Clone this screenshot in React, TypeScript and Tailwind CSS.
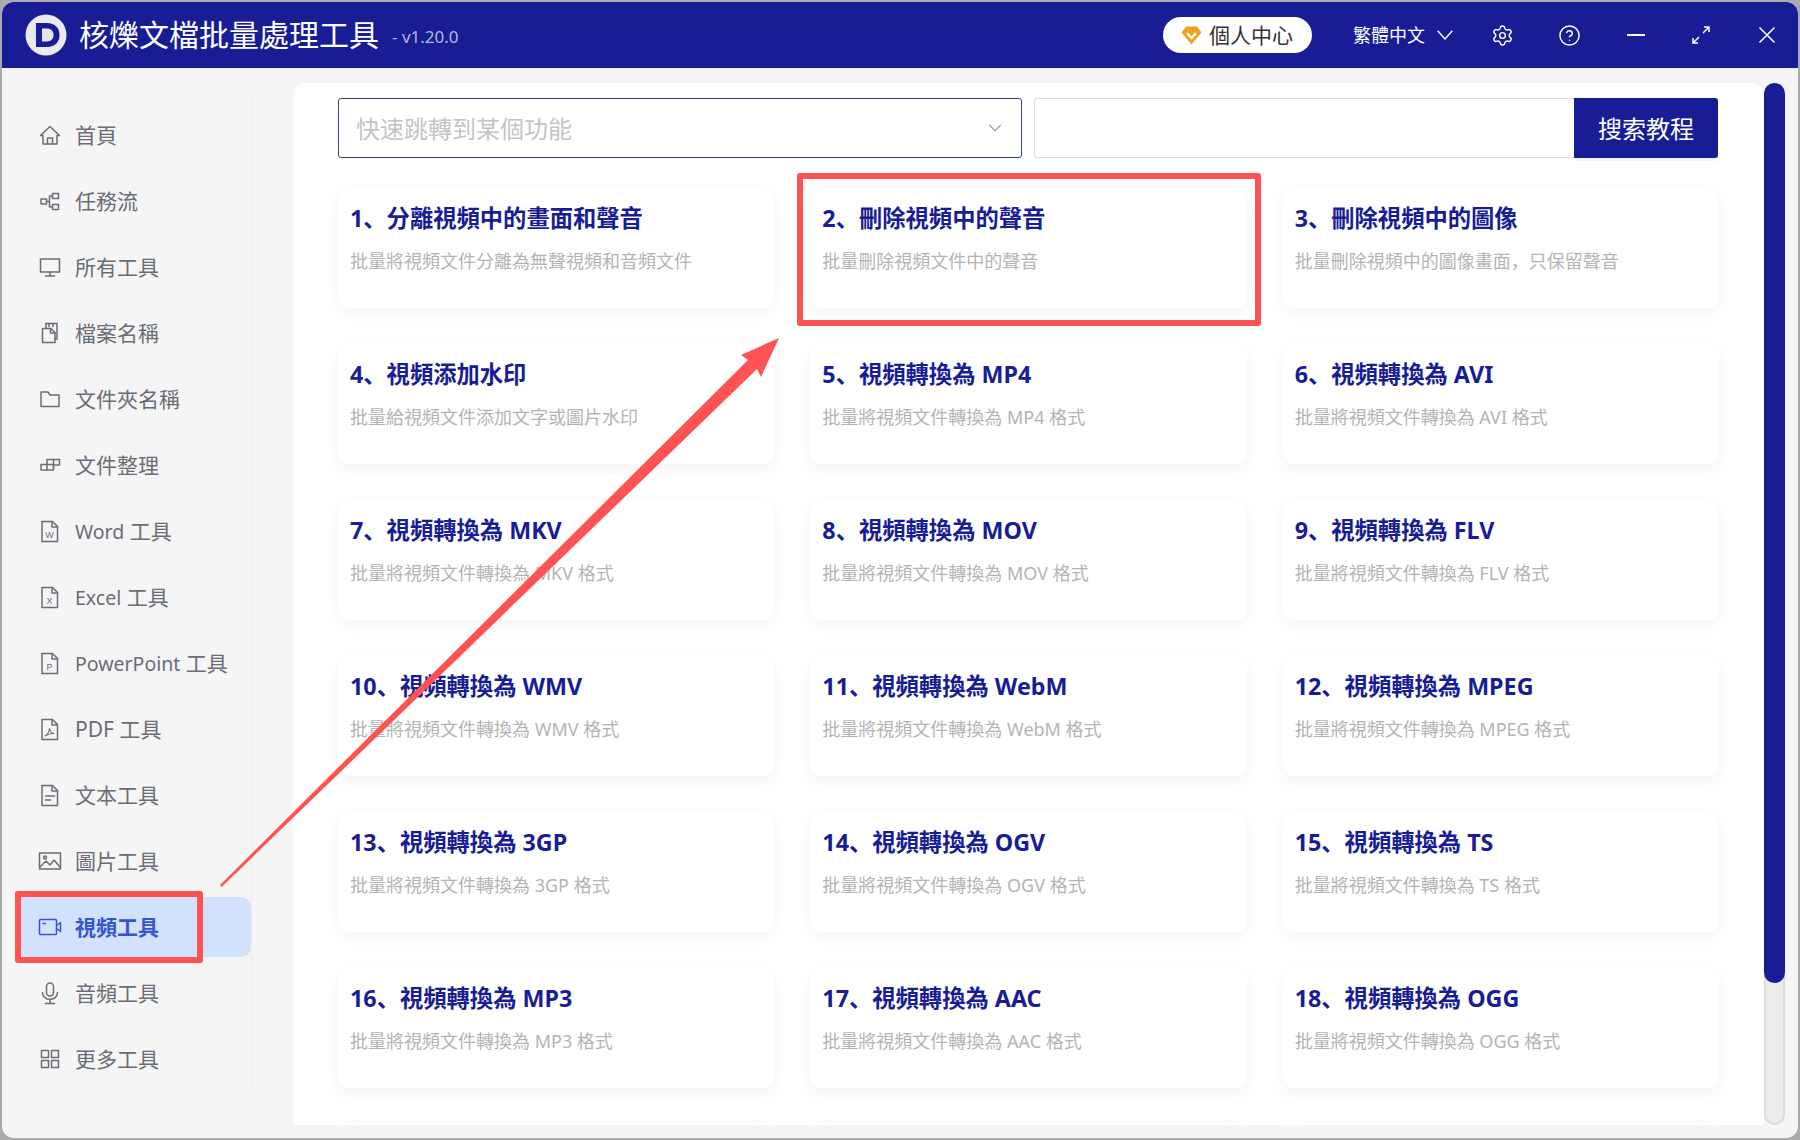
import React from 'react'
import { Settings, CircleHelp, ChevronDown } from 'lucide-react'

const sw = { fill: 'none', stroke: 'currentColor', strokeWidth: 1.5, strokeLinejoin: 'round', strokeLinecap: 'round' } as const

function Svg({ w = 24, h = 24, children }: { w?: number; h?: number; children: React.ReactNode }) {
  return (
    <svg width={w} height={h} viewBox={`0 0 ${w} ${h}`} {...sw}>
      {children}
    </svg>
  )
}

// page with a folded corner, shared by the file type icons
function Doc({ children }: { children?: React.ReactNode }) {
  return (
    <Svg>
      <path d="M4 2.5h10.5l5 5v15H4z" />
      <path d="M14 2.5v5.5h5.5" />
      {children}
    </Svg>
  )
}

function Letter({ c }: { c: string }) {
  return (
    <text x="11.5" y="18.5" textAnchor="middle" fontSize="9" stroke="none" fill="currentColor" fontFamily="Liberation Sans, sans-serif">
      {c}
    </text>
  )
}

function Latin({ text }: { text: string }) {
  return (
    <>
      <span className="text-[19.5px]">{text}</span> 工具
    </>
  )
}

const menu: { key: string; label: React.ReactNode; icon: React.ReactNode; active?: boolean }[] = [
  {
    key: 'home',
    label: '首頁',
    icon: (
      <Svg>
        <path d="M2.5 12.5 12 3.5l9.5 9h-2.5v8.500H5v-8.500z" />
        <path d="M9.500 21v-6h5v6" />
      </Svg>
    ),
  },
  {
    key: 'flow',
    label: '任務流',
    icon: (
      <Svg>
        <rect x="3" y="10" width="5.500" height="5" />
        <rect x="14.500" y="4.500" width="6" height="5" />
        <rect x="14.500" y="15.500" width="6" height="5" />
        <path d="M8.500 12.500h3M11.500 7v11M11.500 7h3M11.500 18h3" />
      </Svg>
    ),
  },
  {
    key: 'all',
    label: '所有工具',
    icon: (
      <Svg>
        <rect x="2.500" y="4" width="19" height="13" />
        <path d="M12 17v3.500M7.500 21h9" />
      </Svg>
    ),
  },
  {
    key: 'filename',
    label: '檔案名稱',
    icon: (
      <Svg>
        <path d="M8 7V2.500M11 2.500v3M15 2.500v3M19 2.500V18h-2" />
        <path d="M8 2.500h11" />
        <path d="M4.500 7.500H13l4 4v10H4.500z" />
        <path d="M12.500 7.500v4.500H17" />
      </Svg>
    ),
  },
  {
    key: 'folder',
    label: '文件夾名稱',
    icon: (
      <Svg>
        <path d="M3 5h7l2 3h9v11.500H3z" />
      </Svg>
    ),
  },
  {
    key: 'organize',
    label: '文件整理',
    icon: (
      <Svg>
        <path d="M9 11V6.500h6.500V15" />
        <path d="M15.500 6.500h6v5.500h-6" />
        <path d="M3 11.500h12.500v5.500H3z" />
        <path d="M9 11.500V17" />
      </Svg>
    ),
  },
  { key: 'word', label: <Latin text="Word" />, icon: <Doc><Letter c="W" /></Doc> },
  { key: 'excel', label: <Latin text="Excel" />, icon: <Doc><Letter c="X" /></Doc> },
  { key: 'ppt', label: <Latin text="PowerPoint" />, icon: <Doc><Letter c="P" /></Doc> },
  {
    key: 'pdf',
    label: 'PDF 工具',
    icon: (
      <Doc>
        <path d="M7 19c2.500-1 4-4 4.500-7.500 .5 3 2 4.500 4.500 5-3-.2-6 .5-9 2.500z" strokeWidth="1.100" />
      </Doc>
    ),
  },
  {
    key: 'text',
    label: '文本工具',
    icon: (
      <Doc>
        <path d="M7.500 13h9M7.500 17h5" />
      </Doc>
    ),
  },
  {
    key: 'image',
    label: '圖片工具',
    icon: (
      <Svg>
        <rect x="1.500" y="4" width="21" height="16" />
        <circle cx="7" cy="8.500" r="1.500" />
        <path d="m2 18 6-6 4 4 4-5 6 7" />
      </Svg>
    ),
  },
  {
    key: 'video',
    label: '視頻工具',
    active: true,
    icon: (
      <Svg>
        <rect x="1.500" y="4.500" width="17" height="15" rx="1" />
        <path d="M18.500 10.500 22.500 7.500v9l-4-3M5 8.500h2.500" />
      </Svg>
    ),
  },
  {
    key: 'audio',
    label: '音頻工具',
    icon: (
      <Svg>
        <rect x="8.500" y="2" width="7" height="13" rx="3.500" />
        <path d="M4.500 11.500c0 9 15 9 15 0M12 19v3M7.500 22.500h9" />
      </Svg>
    ),
  },
  {
    key: 'more',
    label: '更多工具',
    icon: (
      <Svg>
        <rect x="3.500" y="3.500" width="7" height="7" />
        <rect x="13.500" y="3.500" width="7" height="7" />
        <rect x="3.500" y="13.500" width="7" height="7" />
        <rect x="13.500" y="13.500" width="7" height="7" />
      </Svg>
    ),
  },
]

const conv = '批量將視頻文件轉換為'
const cards = [
  ['1、分離視頻中的畫面和聲音', '批量將視頻文件分離為無聲視頻和音頻文件'],
  ['2、刪除視頻中的聲音', '批量刪除視頻文件中的聲音'],
  ['3、刪除視頻中的圖像', '批量刪除視頻中的圖像畫面，只保留聲音'],
  ['4、視頻添加水印', '批量給視頻文件添加文字或圖片水印'],
  ['5、視頻轉換為 MP4', `${conv} MP4 格式`],
  ['6、視頻轉換為 AVI', `${conv} AVI 格式`],
  ['7、視頻轉換為 MKV', `${conv} MKV 格式`],
  ['8、視頻轉換為 MOV', `${conv} MOV 格式`],
  ['9、視頻轉換為 FLV', `${conv} FLV 格式`],
  ['10、視頻轉換為 WMV', `${conv} WMV 格式`],
  ['11、視頻轉換為 WebM', `${conv} WebM 格式`],
  ['12、視頻轉換為 MPEG', `${conv} MPEG 格式`],
  ['13、視頻轉換為 3GP', `${conv} 3GP 格式`],
  ['14、視頻轉換為 OGV', `${conv} OGV 格式`],
  ['15、視頻轉換為 TS', `${conv} TS 格式`],
  ['16、視頻轉換為 MP3', `${conv} MP3 格式`],
  ['17、視頻轉換為 AAC', `${conv} AAC 格式`],
  ['18、視頻轉換為 OGG', `${conv} OGG 格式`],
  ['', ''],
  ['', ''],
  ['', ''],
]

function Header() {
  return (
    <div className="flex h-[66px] shrink-0 items-center bg-[#181d96] pl-[23px] text-white">
      <svg width="42" height="42" viewBox="0 0 42 42" className="shrink-0">
        <circle cx="21" cy="21" r="20.500" fill="#e9e9ee" />
        <path d="M11 9h11c8 0 12.500 5 12.500 12S30 33 22 33H11z" fill="#181d96" />
        <path d="M17 14.500h5c4.500 0 6.500 3 6.500 6.500s-2 6.500-6.500 6.500h-5z" fill="#e4e4ea" />
      </svg>
      <span className="ml-[12px] text-[30px] leading-none">核爍文檔批量處理工具</span>
      <span className="ml-[13px] mt-[2px] text-[17px] leading-none text-[#b4b7dc]">- v1.20.0</span>

      <div className="ml-auto flex h-[36px] w-[149px] items-center rounded-full bg-white pl-[18px] text-[21px] text-[#333333]">
        <svg width="21" height="19" viewBox="0 0 21 19" className="shrink-0">
          <path d="M5 .5h11l4.500 6-10 12-10-12z" fill="#eea220" />
          <path d="m6 7 4.500 5L15 7" fill="none" stroke="#fff" strokeWidth="2.200" />
        </svg>
        <span className="ml-[7px] leading-none">個人中心</span>
      </div>
      <span className="ml-[41px] text-[18px] leading-none">繁體中文</span>
      <svg width="16" height="10" viewBox="0 0 16 10" fill="none" stroke="#fff" strokeWidth="1.400" className="ml-[12px]">
        <path d="m.7.7 7.300 8.300L15.300.7" />
      </svg>
      <Settings size={23} strokeWidth={1.500} className="ml-[38px]" />
      <CircleHelp size={23} strokeWidth={1.500} className="ml-[44px]" />
      <div className="ml-[46px] h-[2px] w-[18px] bg-white" />
      <svg width="18" height="18" viewBox="0 0 18 18" fill="none" stroke="#fff" strokeWidth="1.500" className="ml-[47px]">
        <path d="M11 7l6-6M12 1h5v5M7 11l-6 6M6 17H1v-5" />
      </svg>
      <svg width="18" height="18" viewBox="0 0 18 18" fill="none" stroke="#fff" strokeWidth="1.500" className="ml-[48px] mr-[22px]">
        <path d="M1.500 1.500l15 15M16.500 1.500l-15 15" />
      </svg>
    </div>
  )
}

function Sidebar() {
  return (
    <div className="w-[291px] shrink-0">
      <div className="ml-[16px] mt-[30px] flex h-[992px] w-[234px] flex-col gap-[6px] border-r border-dotted border-[#e4e4e4] pt-[7px]">
        {menu.map(item => (
          <div
            key={item.key}
            className={`flex h-[60px] shrink-0 items-center gap-[13px] rounded-[10px] pl-[20px] text-[21px] ${
              item.active ? 'bg-[#d2e2fc] font-bold text-[#3555cf]' : 'text-[#6a6d75]'
            }`}
          >
            {item.icon}
            <span className="leading-none">{item.label}</span>
          </div>
        ))}
      </div>
    </div>
  )
}

function Card({ title, desc }: { title: string; desc: string }) {
  return (
    <div className="h-[120px] rounded-[12px] bg-white px-[12px] pt-[13px] shadow-[0_5px_18px_rgba(0,0,0,0.05)]">
      <div className="h-[34px] text-[23.3px] font-bold leading-[34px] text-[#181d96]">{title}</div>
      <div className="mt-[14px] h-[24px] text-[18px] leading-[24px] text-[#b4b4b4]">{desc}</div>
    </div>
  )
}

function Main() {
  return (
    <div className="mb-[13px] mt-[15px] flex min-w-0 flex-1">
      <div className="h-[1042px] w-[1471px] overflow-hidden rounded-t-[12px] bg-white pl-[45px] pr-[45px] pt-[15px]">
        <div className="flex h-[60px] w-[1380px]">
          <div className="flex w-[684px] items-center justify-between rounded-[3px] border border-[#2f3ea3] pb-[0px] pl-[17px] pr-[15px] text-[24px] text-[#c4c4c4]">
            <span className="mt-[2px] leading-none">快速跳轉到某個功能</span>
            <ChevronDown size={22} strokeWidth={1.200} className="text-[#9a9a9a]" />
          </div>
          <div className="ml-[12px] w-[540px] rounded-l-[3px] border border-r-0 border-[#dddddd]" />
          <div className="flex w-[144px] items-center justify-center rounded-r-[3px] bg-[#181d96] text-[24px] text-white shadow-[0_3px_0_rgba(0,0,0,0.04)]">
            <span className="mt-[1px] leading-none">搜索教程</span>
          </div>
        </div>
        <div className="mt-[30px] grid w-[1381px] grid-cols-3 gap-x-[36px] gap-y-[36px]">
          {cards.map((c, i) => (
            <Card key={i} title={c[0]} desc={c[1]} />
          ))}
        </div>
      </div>
      <div className="relative ml-0 w-[21px] rounded-full border-2 border-[#dcdcdc] bg-[#ececec]">
        <div className="absolute -left-[2px] -top-[2px] h-[900px] w-[21px] rounded-full bg-[#181d96]" />
      </div>
    </div>
  )
}

export default function App() {
  return (
    <div className="relative h-[1140px] w-[1800px] overflow-hidden bg-[#ababab] p-[2px] font-['Noto_Sans','Noto_Sans_CJK_SC',sans-serif]">
      <div className="flex h-full flex-col overflow-hidden rounded-[12px] bg-[#f5f5f5]">
        <Header />
        <div className="flex min-h-0 flex-1">
          <Sidebar />
          <Main />
        </div>
      </div>

      {/* annotations painted over the screenshot */}
      <div className="absolute left-[15px] top-[891px] h-[72px] w-[188px] rounded-[3px] border-[6px] border-[#ff5252]" />
      <div className="absolute left-[797px] top-[173px] h-[153px] w-[464px] rounded-[3px] border-[6px] border-[#ff5252]" />
      <svg width="1800" height="1140" className="pointer-events-none absolute left-0 top-0">
        <polygon points="220,885 221.500,887 757,369 761,377 779,338 741,355 748,360" fill="#ff5252" />
      </svg>
    </div>
  )
}
